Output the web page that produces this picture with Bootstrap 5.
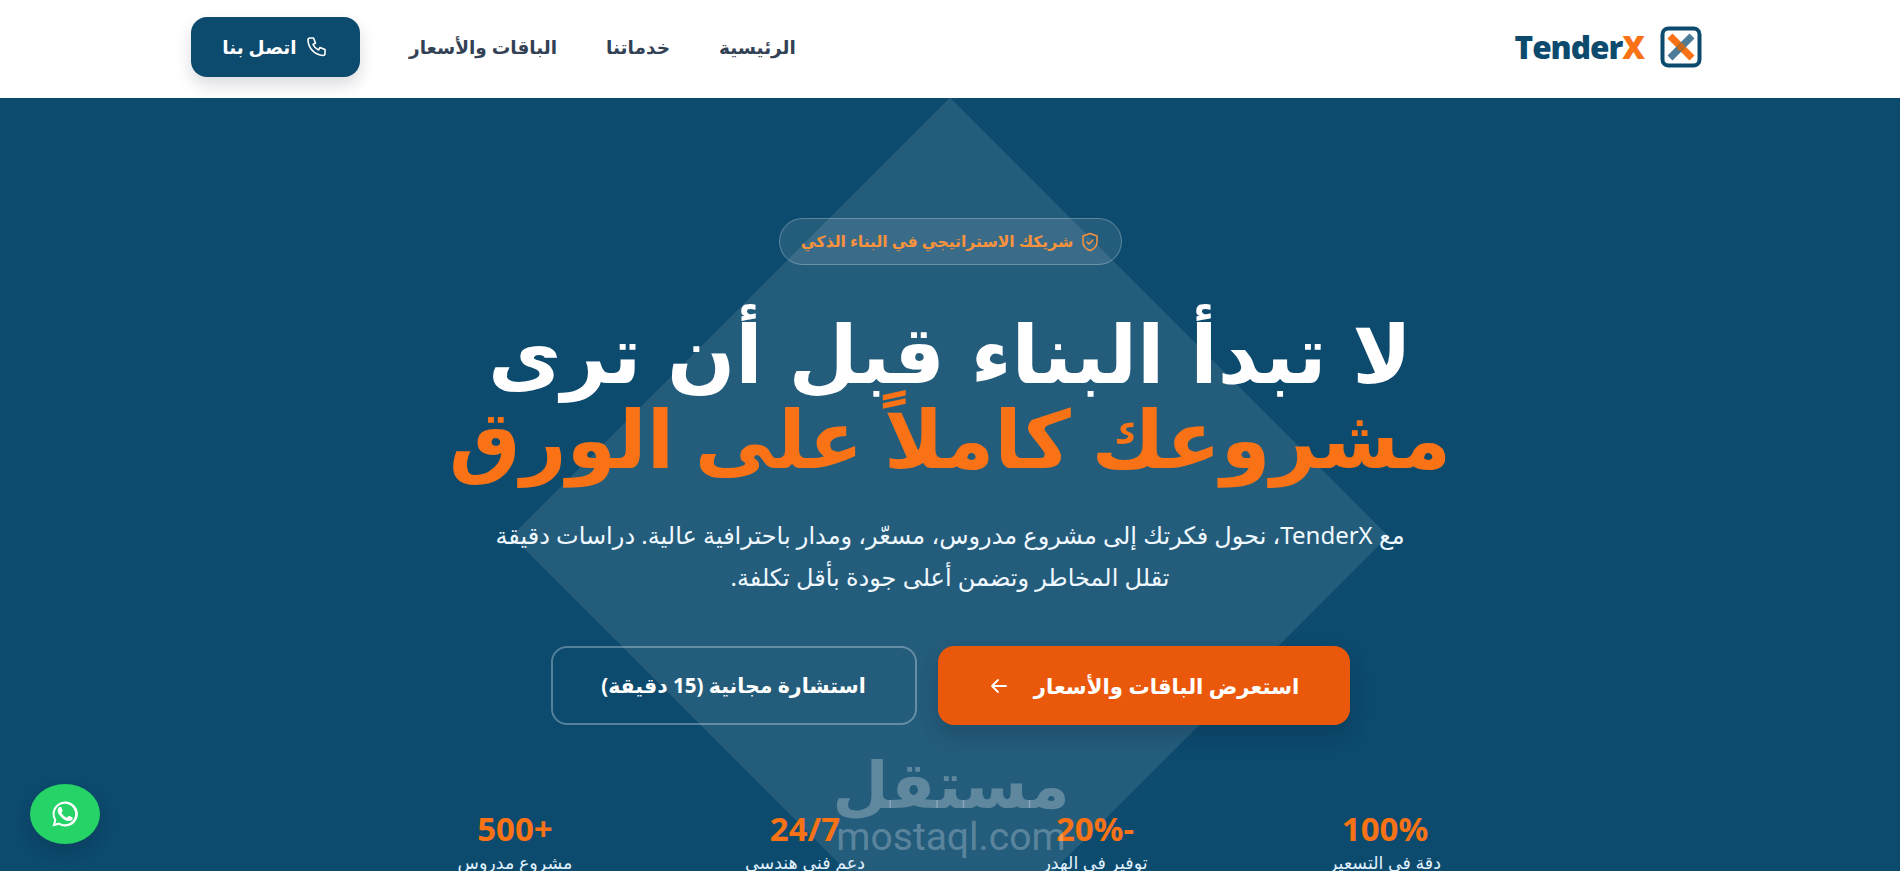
<!DOCTYPE html>
<html lang="ar" dir="rtl">
<head>
<meta charset="utf-8">
<title>TenderX</title>
<link href="https://cdn.jsdelivr.net/npm/bootstrap@5.3.0/dist/css/bootstrap.min.css" rel="stylesheet">
<style>
html,body{height:871px;overflow:hidden}
body{font-family:"Noto Sans","DejaVu Sans",sans-serif;background:#0c4a6e;color:#fff}
.topbar{height:98px;background:#fff;box-shadow:0 1px 0 #e2e8f0;padding-bottom:4px}
.topwrap{width:1520px;padding-right:8px;padding-left:1px}
.brandtext{font-family:"Open Sans",sans-serif;font-weight:800;font-size:31.500px;letter-spacing:-1px;color:#0c4a6e;direction:ltr}
.brandtext span{color:#f97316}
.navlnk{color:#334155;font-weight:700;font-size:18.500px;text-decoration:none}
.navgap{gap:49px}
.callbtn{background:#0c4a6e;color:#fff;border-radius:16px;height:60px;width:169px;font-weight:700;font-size:18.500px;box-shadow:0 8px 16px rgba(15,23,42,.15);border:0}
.callbtn:hover{background:#0c4a6e;color:#fff}
.herobox{height:773px;background:#0c4a6e;padding-top:120px}
.diamondbg{position:absolute;left:640px;top:128px;width:620px;height:620px;background:rgba(255,255,255,.1);transform:rotate(45deg)}
.herozone{z-index:1}
.tagpill{height:47px;width:343px;border:1px solid rgba(255,255,255,.25);background:rgba(255,255,255,.1);color:#fb923c;font-weight:700;font-size:15.600px;border-radius:24px}
.bigtitle{font-size:80px;line-height:85px;font-weight:800;margin:0;margin-top:44px;word-spacing:5px}
.bigtitle span{color:#f97316;display:block;word-spacing:0}
.subtext{font-size:24px;line-height:42px;margin:35px 0 0;width:930px;color:#f0f9ff}
.ctarow{gap:21px;margin-top:48px}
.ctamain{width:412px;height:79px;background:#ea580c;color:#fff;border:0;border-radius:16px;font-weight:700;font-size:21.200px;box-shadow:0 10px 20px rgba(15,23,42,.2)}
.ctamain:hover,.ctaline:hover{color:#fff}
.ctaline{width:366px;height:79px;background:transparent;color:#fff;border:2px solid rgba(255,255,255,.3);border-radius:16px;font-weight:700;font-size:20.500px}
.statband{width:1160px;margin-top:84px}
.statcell{width:290px}
.statnum{font-size:33px;line-height:40px;font-weight:700;color:#f97316;direction:ltr}
.statlab{font-size:17.500px;line-height:24px;color:#e0f2fe;margin-top:1px}
.markwater{position:absolute;left:831px;top:747px;width:240px;color:rgba(255,255,255,.27);z-index:2;pointer-events:none}
.markar{font-size:65px;line-height:72px;font-weight:700}
.markla{font-size:39px;line-height:36px;font-family:"Roboto",sans-serif;direction:ltr}
.wabtn{position:absolute;left:30px;top:784px;width:70px;height:60px;background:#25d366;border-radius:50%;z-index:3;box-shadow:0 8px 16px rgba(15,23,42,.2)}
</style>
</head>
<body>
<header class="topbar d-flex align-items-center justify-content-center">
  <div class="topwrap d-flex align-items-center justify-content-between">
    <a class="d-flex align-items-center gap-3 text-decoration-none" href="#">
      <svg width="42" height="42" viewBox="0 0 42 42"><rect x="2.500" y="2.500" width="37" height="37" rx="6" fill="#fff" stroke="#0c4a6e" stroke-width="4"/><path d="M10 10 32 32" stroke="#f97316" stroke-width="7"/><path d="M32 10 10 32" stroke="#4d7c9a" stroke-width="7"/><circle cx="21" cy="21" r="4" fill="#c2691f"/></svg>
      <span class="brandtext">Tender<span>X</span></span>
    </a>
    <nav class="d-flex align-items-center navgap">
      <a class="navlnk" href="#">الرئيسية</a>
      <a class="navlnk" href="#">خدماتنا</a>
      <a class="navlnk" href="#">الباقات والأسعار</a>
      <a class="btn callbtn d-flex align-items-center justify-content-center gap-2" href="#">
        <svg width="24" height="24" viewBox="0 0 24 24" fill="none" stroke="#fff" stroke-width="1.600" stroke-linecap="round" stroke-linejoin="round"><path d="M5 3h3.500l2 5-2.500 1.500a11 11 0 0 0 5.500 5.500l1.500-2.500 5 2V18.500a2 2 0 0 1-2 2A16 16 0 0 1 3 5a2 2 0 0 1 2-2"/></svg>
        اتصل بنا
      </a>
    </nav>
  </div>
</header>
<main class="herobox position-relative overflow-hidden">
  <div class="diamondbg"></div>
  <div class="herozone position-relative d-flex flex-column align-items-center text-center">
    <div class="tagpill d-flex align-items-center justify-content-center gap-2">
      <svg width="18" height="20" viewBox="0 0 18 20" fill="none" stroke="#fb923c" stroke-width="1.500" stroke-linecap="round" stroke-linejoin="round"><path d="M9 1.500 16 4v6c0 4-3 7-7 8.500C5 17 2 14 2 10V4z"/><path d="M6 10l2 2 4-4"/></svg>
      شريكك الاستراتيجي في البناء الذكي
    </div>
    <h1 class="bigtitle">لا تبدأ البناء قبل أن ترى<span>مشروعك كاملاً على الورق</span></h1>
    <p class="subtext">مع TenderX، نحول فكرتك إلى مشروع مدروس، مسعّر، ومدار باحترافية عالية. دراسات دقيقة تقلل المخاطر وتضمن أعلى جودة بأقل تكلفة.</p>
    <div class="d-flex ctarow">
      <a class="btn ctamain d-flex align-items-center justify-content-center gap-4" href="#">استعرض الباقات والأسعار
        <svg width="22" height="22" viewBox="0 0 22 22" fill="none" stroke="#fff" stroke-width="1.800" stroke-linecap="round" stroke-linejoin="round"><path d="M18 11H4M10 5l-6 6 6 6"/></svg>
      </a>
      <a class="btn ctaline d-flex align-items-center justify-content-center" href="#">استشارة مجانية (15 دقيقة)</a>
    </div>
    <div class="d-flex statband">
      <div class="statcell"><div class="statnum">100%</div><div class="statlab">دقة في التسعير</div></div>
      <div class="statcell"><div class="statnum">20%-</div><div class="statlab">توفير في الهدر</div></div>
      <div class="statcell"><div class="statnum">24/7</div><div class="statlab">دعم فني هندسي</div></div>
      <div class="statcell"><div class="statnum">500+</div><div class="statlab">مشروع مدروس</div></div>
    </div>
  </div>
</main>
<div class="markwater text-center"><div class="markar">مستقل</div><div class="markla">mostaql.com</div></div>
<a class="wabtn d-flex align-items-center justify-content-center" href="#" aria-label="WhatsApp">
  <svg width="30" height="30" viewBox="0 0 24 24" fill="#fff"><path d="M17.500 14.400c-.3-.1-1.700-.8-2-.9-.3-.1-.5-.1-.7.100-.2.300-.8.900-.9 1.100-.2.200-.3.200-.6.100-.3-.2-1.200-.5-2.400-1.500-.9-.8-1.500-1.800-1.600-2.100-.2-.3 0-.4.100-.6l.4-.5c.1-.2.200-.3.300-.5.100-.2 0-.4 0-.5-.1-.1-.7-1.600-.9-2.200-.2-.6-.5-.5-.7-.5h-.6c-.2 0-.5.100-.8.400-.3.300-1 1-1 2.500s1.100 2.900 1.200 3.100c.2.200 2.100 3.200 5.100 4.500.7.300 1.300.5 1.700.6.700.2 1.400.2 1.900.1.600-.1 1.700-.7 2-1.400.2-.7.200-1.200.2-1.400-.1-.1-.3-.2-.6-.3z"/><path fill-rule="evenodd" d="M12 2a10 10 0 0 0-8.600 15L2 22l5.200-1.400A10 10 0 1 0 12 2zm0 18.200c-1.600 0-3-.4-4.300-1.200l-.3-.2-3.100.8.800-3-.2-.3A8.200 8.200 0 1 1 12 20.200z"/></svg>
</a>
</body>
</html>
